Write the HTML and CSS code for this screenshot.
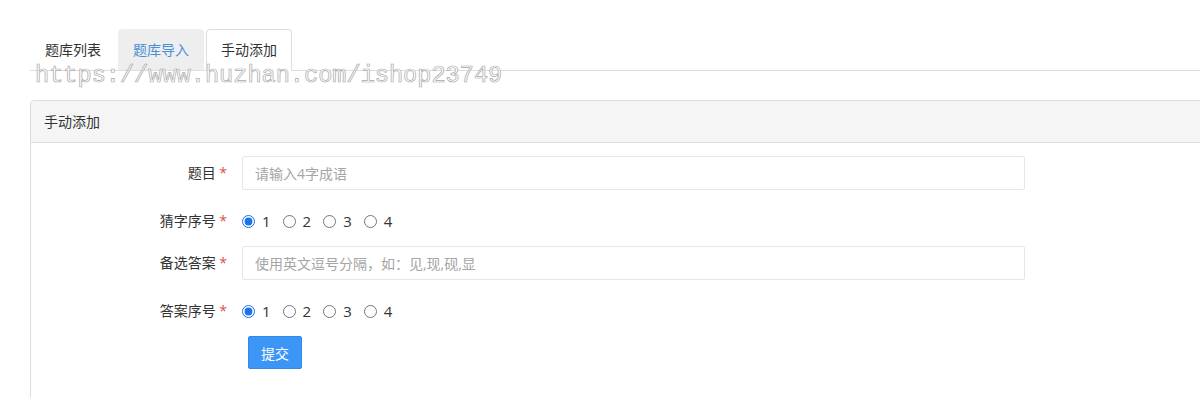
FILE: index.html
```html
<!DOCTYPE html>
<html lang="zh-CN">
<head>
<meta charset="utf-8">
<title>手动添加</title>
<link rel="stylesheet" href="styles.css">
</head>
<body>
<div class="page">
  <ul class="tabs">
    <li class="tab"><a>题库列表</a></li>
    <li class="tab hover"><a>题库导入</a></li>
    <li class="tab active"><a>手动添加</a></li>
  </ul>
  <div class="panel">
    <div class="panel-heading">手动添加</div>
    <div class="panel-body">
      <form class="form">
        <div class="row">
          <label class="label">题目 <span class="req">*</span></label>
          <div class="control"><input class="input" type="text" placeholder="请输入4字成语"></div>
        </div>
        <div class="row">
          <label class="label">猜字序号 <span class="req">*</span></label>
          <div class="control radios">
            <label class="radio"><input type="radio" name="a" checked><span>1</span></label>
            <label class="radio"><input type="radio" name="a"><span>2</span></label>
            <label class="radio"><input type="radio" name="a"><span>3</span></label>
            <label class="radio"><input type="radio" name="a"><span>4</span></label>
          </div>
        </div>
        <div class="row">
          <label class="label">备选答案 <span class="req">*</span></label>
          <div class="control"><input class="input" type="text" placeholder="使用英文逗号分隔，如：见,现,砚,显"></div>
        </div>
        <div class="row">
          <label class="label">答案序号 <span class="req">*</span></label>
          <div class="control radios">
            <label class="radio"><input type="radio" name="b" checked><span>1</span></label>
            <label class="radio"><input type="radio" name="b"><span>2</span></label>
            <label class="radio"><input type="radio" name="b"><span>3</span></label>
            <label class="radio"><input type="radio" name="b"><span>4</span></label>
          </div>
        </div>
        <div class="row">
          <div class="label"></div>
          <div class="control"><button type="button" class="btn">提交</button></div>
        </div>
      </form>
    </div>
  </div>
  <div class="watermark">https://www.huzhan.com/ishop23749</div>
</div>
</body>
</html>
```

FILE: styles.css
```css
html, body {
  margin: 0;
  padding: 0;
  background: #fff;
  overflow: hidden;
}
body {
  font-family: "Open Sans", "Noto Sans CJK SC", sans-serif;
  font-size: 14px;
  color: #333;
}
.page {
  position: relative;
  width: 1240px;
  padding: 29px 0 0 30px;
}
.tabs {
  list-style: none;
  margin: 0;
  padding: 0;
  display: flex;
  border-bottom: 1px solid #ddd;
}
.tab {
  margin: 0 2px -1px 0;
}
.tab a {
  display: block;
  padding: 10px 14px;
  line-height: 20px;
  border: 1px solid transparent;
  border-radius: 4px 4px 0 0;
  color: #333;
}
.tab.hover a {
  background: #eee;
  border-color: #eee #eee #ddd;
  color: #4a8fd6;
}
.tab.active a {
  background: #fff;
  border-color: #ddd #ddd transparent;
  color: #333;
}
.panel {
  margin-top: 29px;
  border: 1px solid #ddd;
  border-radius: 4px 0 0 0;
  height: 400px;
}
.panel-heading {
  background: #f5f5f5;
  border-bottom: 1px solid #ddd;
  padding: 10px 13px;
  line-height: 21px;
  border-radius: 3px 0 0 0;
}
.panel-body {
  padding: 13px 15px;
}
.form {
  display: flex;
  flex-direction: column;
  gap: 15px;
}
.row {
  display: grid;
  grid-template-columns: 181px 783px;
  column-gap: 15px;
}
.label {
  text-align: right;
  padding-top: 7px;
  line-height: 20px;
}
.row:has(.radios) .label {
  padding-top: 6px;
}
.req {
  color: #d9534f;
}
.input {
  box-sizing: border-box;
  width: 100%;
  height: 34px;
  padding: 6px 12px;
  border: 1px solid #e6e6e6;
  border-radius: 2px;
  font: inherit;
  color: #333;
  outline: none;
}
.input::placeholder {
  color: #a5a5a5;
}
.radios {
  display: flex;
  gap: 12px;
  padding-top: 6px;
  line-height: 20px;
}
.radio {
  display: flex;
  align-items: center;
  gap: 7px;
  font-size: 15px;
}
.radio input {
  margin: 0;
  width: 13px;
  height: 13px;
  accent-color: #1a73e8;
}
.btn {
  margin-left: 6px;
  height: 33px;
  padding: 0 12px;
  background: #3b96f5;
  border: 1px solid #2f8ae8;
  border-radius: 2px;
  color: #fff;
  font: inherit;
  font-size: 14px;
}
.watermark {
  position: absolute;
  left: 35px;
  top: 62px;
  font-family: "Liberation Mono", monospace;
  font-size: 23.6px;
  line-height: 28px;
  color: #fff;
  -webkit-text-stroke: 0.7px #a9a9a9;
  pointer-events: none;
}
```
